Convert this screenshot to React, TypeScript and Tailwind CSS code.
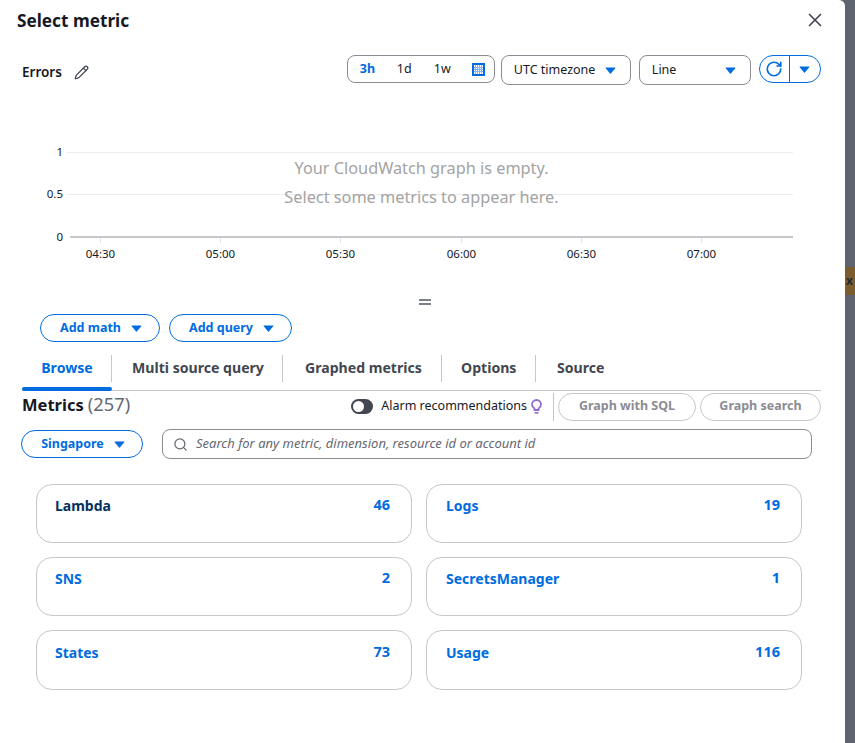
import React from 'react';
import { Pencil, X, RotateCw, Search } from 'lucide-react';

function Caret({ className = '' }: { className?: string }) {
  return (
    <svg width="11" height="7" viewBox="0 0 12 8" className={className}>
      <path d="M1 0.5h10a0.6 0.6 0 0 1 .5 1L6.4 7.4a.6.6 0 0 1-.9 0L.5 1.500a.6.6 0 0 1 .5-1z" fill="#006ce0" />
    </svg>
  );
}

function CalendarIcon() {
  return (
    <svg width="13" height="13" viewBox="0 0 13 13">
      <rect width="13" height="13" fill="#006ce0" />
      <rect x="2" y="2" width="9" height="9" fill="#ffffff" />
      <path d="M2 4.500h9M2 6.500h9M2 8.500h9M3.500 2v9M5.500 2v9M7.500 2v9M9.500 2v9" stroke="#82b6ef" strokeWidth="1" />
    </svg>
  );
}

function BulbIcon() {
  return (
    <svg width="11" height="15" viewBox="0 0 11 15" className="ml-[4px]" fill="none" stroke="#9469d6">
      <path d="M3.500 9.500C2 8.600 1 7.300 1 5.500a4.500 4.500 0 0 1 9 0c0 1.800-1 3.100-2.500 4v1.500h-4z" strokeWidth="1.800" />
      <path d="M3.500 13.800h4" strokeWidth="1.600" />
    </svg>
  );
}

function Chart() {
  const gridLabel = 'fill-[#16191f] text-[11.500px]';
  const ticks = [
    { x: 100, label: '04:30' },
    { x: 220, label: '05:00' },
    { x: 340, label: '05:30' },
    { x: 461, label: '06:00' },
    { x: 581, label: '06:30' },
    { x: 701, label: '07:00' },
  ];
  return (
    <div className="relative h-[180px]">
      <svg width="843" height="180" viewBox="0 100 843 180">
        <line x1="67" x2="793" y1="152.500" y2="152.500" stroke="#ececec" />
        <line x1="67" x2="793" y1="194.500" y2="194.500" stroke="#ececec" />
        <line x1="70" x2="793" y1="237" y2="237" stroke="#c6c6cd" strokeWidth="2" />
        <text x="63" y="156" textAnchor="end" className={gridLabel}>1</text>
        <text x="63" y="198" textAnchor="end" className={gridLabel}>0.5</text>
        <text x="63" y="241" textAnchor="end" className={gridLabel}>0</text>
        {ticks.map((t) => (
          <g key={t.label}>
            <line x1={t.x + 0.5} x2={t.x + 0.5} y1="238" y2="243" stroke="#e3e3e3" />
            <text x={t.x + 0.5} y="258" textAnchor="middle" className={gridLabel}>{t.label}</text>
          </g>
        ))}
      </svg>
      <div className="absolute left-0 top-[54px] w-[843px] text-center text-[16.300px] leading-[28.500px] text-[#a3a3a3]">
        <div>Your CloudWatch graph is empty.</div>
        <div>Select some metrics to appear here.</div>
      </div>
    </div>
  );
}

const tabs = [
  { label: 'Browse', box: 'w-[90px] justify-center' },
  { label: 'Multi source query', box: 'w-[171px] pl-[20px]' },
  { label: 'Graphed metrics', box: 'w-[159px] pl-[22px]' },
  { label: 'Options', box: 'w-[94px] pl-[19px]' },
  { label: 'Source', box: 'pl-[21px]' },
];

const services = [
  { name: 'Lambda', count: 46, dark: true, box: 'h-[59px] pl-[18px] pt-[10px]' },
  { name: 'Logs', count: 19, box: 'h-[59px] pl-[19px] pt-[10px]' },
  { name: 'SNS', count: 2, box: 'h-[59px] pl-[18px] pt-[10px]' },
  { name: 'SecretsManager', count: 1, box: 'h-[59px] pl-[19px] pt-[10px]' },
  { name: 'States', count: 73, box: 'h-[60px] pl-[18px] pt-[11px]' },
  { name: 'Usage', count: 116, box: 'h-[60px] pl-[19px] pt-[11px]' },
];

function OutlineButton({ label, className }: { label: string; className: string }) {
  return (
    <button className={`flex h-[28px] items-center justify-center gap-[10px] rounded-full border border-[#006ce0] pl-[2px] text-[12.500px] font-bold text-[#006ce0] ${className}`}>
      {label}
      <Caret />
    </button>
  );
}

export default function App() {
  return (
    <div className="flex h-[743px] w-[855px] overflow-hidden bg-[#5f6471] text-[#16191f] [font-family:'Noto_Sans',sans-serif]">
      <div className="h-full w-[845px] shrink-0 rounded-tr-[6px] bg-white">
        {/* Header */}
        <div className="flex h-[41px] items-center justify-between pl-[17px] pr-[19px]">
          <h1 className="text-[17.200px] font-bold text-[#16191f]">Select metric</h1>
          <X size={22} strokeWidth={1.8} className="-mt-[1px] text-[#424650]" />
        </div>

        {/* Toolbar */}
        <div className="mt-[14px] flex h-[29px] items-start pl-[22px]">
          <div className="flex h-[34px] items-center gap-[12px] text-[13.500px] font-semibold">
            Errors
            <Pencil size={15} strokeWidth={2} className="text-[#424650]" />
          </div>
          <div className="ml-[258px] flex h-[28px] w-[148px] items-center rounded-[8px] border border-[#8c8c94] pl-[12px] text-[12.500px]">
            <span className="w-[37px] font-bold text-[#006ce0]">3h</span>
            <span className="w-[37px]">1d</span>
            <span className="w-[38px]">1w</span>
            <CalendarIcon />
          </div>
          <div className="ml-[6px] flex h-[30px] w-[130px] items-center justify-between rounded-[8px] border border-[#8c8c94] pl-[12px] pr-[14px] text-[12.500px]">
            UTC timezone
            <Caret />
          </div>
          <div className="ml-[8px] flex h-[30px] w-[112px] items-center justify-between rounded-[8px] border border-[#8c8c94] pl-[12px] pr-[14px] text-[12.500px]">
            Line
            <Caret />
          </div>
          <div className="ml-[8px] flex h-[28px] w-[62px] items-center rounded-full border border-[#006ce0]">
            <div className="flex h-full w-[30px] items-center justify-center border-r border-[#006ce0]">
              <RotateCw size={18} strokeWidth={2.2} className="text-[#006ce0]" />
            </div>
            <div className="flex flex-1 items-center justify-center">
              <Caret />
            </div>
          </div>
        </div>

        <div className="mt-[16px]">
          <Chart />
        </div>

        {/* Resize handle */}
        <div className="mt-[19px] flex w-[843px] justify-center pl-[6px]">
          <div className="h-[6px] w-[12px] border-y-2 border-[#7d8089]" />
        </div>

        <div className="mt-[9px] flex gap-[9px] pl-[40px]">
          <OutlineButton label="Add math" className="w-[120px]" />
          <OutlineButton label="Add query" className="w-[123px]" />
        </div>

        {/* Tabs */}
        <div className="ml-[22px] mt-[8px] flex h-[41px] w-[799px] border-b border-[#c6c6cd]">
          {tabs.map((tab, i) => (
            <div key={tab.label} className={`relative flex h-[40px] items-center pb-[5px] ${tab.box}`}>
              <span className={`text-[14.100px] font-bold ${i === 0 ? 'text-[#006ce0]' : 'text-[#424650]'}`}>{tab.label}</span>
              {i < tabs.length - 1 && <span className="absolute bottom-[8px] right-0 top-[5px] w-px bg-[#c6c6cd]" />}
              {i === 0 && <span className="absolute bottom-[-1px] left-0 h-[4px] w-full rounded-[2px] bg-[#006ce0]" />}
            </div>
          ))}
        </div>

        {/* Metrics heading */}
        <div className="ml-[22px] flex h-[29px] w-[799px] items-center">
          <div className="-mt-[2px] leading-[28px]">
            <span className="text-[16.500px] font-bold">Metrics</span>{' '}
            <span className="text-[18.300px] text-[#656871]">(257)</span>
          </div>
          <div className="ml-auto mt-[2px] flex items-center">
            <span className="relative h-[15px] w-[22px] rounded-full bg-[#424650]">
              <span className="absolute left-[2px] top-[2px] h-[11px] w-[11px] rounded-full bg-white" />
            </span>
            <span className="ml-[8px] text-[12.500px]">Alarm recommendations</span>
            <BulbIcon />
            <span className="ml-[11px] mr-[4px] h-[28px] w-px bg-[#c6c6cd]" />
            <button className="h-[28px] w-[138px] rounded-full border border-[#c6c6cd] text-[12.500px] font-bold text-[#8c8c94]">Graph with SQL</button>
            <button className="ml-[4px] h-[28px] w-[121px] rounded-full border border-[#c6c6cd] text-[12.500px] font-bold text-[#8c8c94]">Graph search</button>
          </div>
        </div>

        {/* Region and search */}
        <div className="ml-[21px] mt-[9px] flex items-center">
          <OutlineButton label="Singapore" className="w-[122px]" />
          <div className="ml-[19px] flex h-[30px] w-[650px] items-center rounded-[8px] border border-[#8c8c94] pl-[10px]">
            <Search size={15} strokeWidth={2} className="text-[#656871]" />
            <span className="ml-[8px] text-[13px] italic text-[#656871]">Search for any metric, dimension, resource id or account id</span>
          </div>
        </div>

        {/* Service cards */}
        <div className="ml-[36px] mt-[25px] grid w-[766px] grid-cols-2 gap-x-[14px] gap-y-[14px]">
          {services.map((s) => (
            <div key={s.name} className={`flex justify-between rounded-[16px] border border-[#c6c6cd] pr-[21px] text-[14px] font-bold ${s.box}`}>
              <span className={s.dark ? 'text-[#033160]' : 'text-[#006ce0]'}>{s.name}</span>
              <span className="-mt-[1px] text-[14.500px] text-[#006ce0]">{s.count}</span>
            </div>
          ))}
        </div>
      </div>

      {/* Page behind the dialog */}
      <div className="mt-[267px] flex h-[28px] flex-1 items-center overflow-hidden bg-[#7b5c2e] text-[12px] font-bold text-[#1f2a33]">
        <span className="ml-[1px]">x</span>
      </div>
    </div>
  );
}
